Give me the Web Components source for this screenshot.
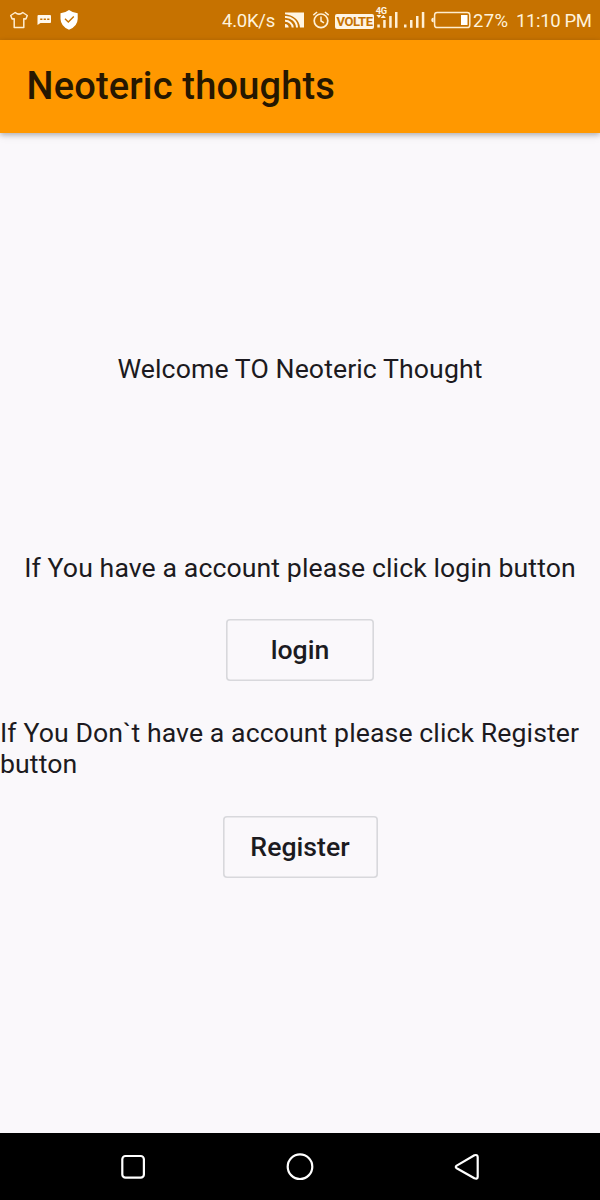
<!DOCTYPE html>
<html lang="en">
<head>
<meta charset="utf-8">
<title>Neoteric thoughts</title>
<style>
html,body{margin:0;height:100%}
body{font-family:Roboto,"Liberation Sans",sans-serif;background:#faf8fb;overflow:hidden}
</style>
</head>
<body>
<phone-screen>
  <status-bar slot="status"></status-bar>
  <app-bar slot="bar">Neoteric thoughts</app-bar>
  <welcome-page></welcome-page>
  <nav-bar slot="nav"></nav-bar>
</phone-screen>
<script>
function define(name, markup) {
  const t = document.createElement('template');
  t.innerHTML = markup;
  customElements.define(name, class extends HTMLElement {
    constructor() {
      super();
      this.attachShadow({mode: 'open'}).appendChild(t.content.cloneNode(true));
    }
  });
}

define('phone-screen', `
<style>
:host{display:flex;flex-direction:column;width:600px;height:1200px;background:#faf8fb}
main{flex:1;min-height:0}
</style>
<slot name="status"></slot><slot name="bar"></slot><main><slot></slot></main><slot name="nav"></slot>`);

define('status-bar', `
<style>
:host{display:flex;align-items:center;height:40px;box-sizing:border-box;background:#c67200;color:#fff3dc;font-size:18.5px;line-height:40px;white-space:nowrap}
svg{display:block;flex:none}
span{flex:none}
.left{width:222px;flex:none}
.rate{width:62px;letter-spacing:-.25px}
.volte{width:39px;height:15px;margin:3px 0 0 4px;border-radius:2px;background:#fff5e4;color:#c67200;font-size:13px;font-weight:700;line-height:15.5px;text-align:center;letter-spacing:-.45px}
.rate,.pct,.time{padding-top:2px}
.pct{width:43px;letter-spacing:.3px}
.time{letter-spacing:-.38px}
</style>
<svg class="left" width="222" height="40" viewBox="0 0 222 40">
  <path d="M15.2 12.5 Q19 15.8 22.8 12.5 L27.3 15.5 L25.9 19 L23.8 18.7 V27.5 H14.2 V18.7 L12.1 19 L10.7 15.5 Z" fill="none" stroke="#ffedcf" stroke-width="1.5" stroke-linejoin="round"/>
  <path d="M38.5 15 H50 Q51 15 51 16 V22.2 Q51 23 50 23 H40.5 L37.5 25 V16 Q37.5 15 38.5 15Z" fill="#fff8ed"/>
  <path d="M40.2 19.3h2.2M43.7 19.3h2.2M47.2 19.3h2.2" stroke="#c67200" stroke-width="1.5"/>
  <path d="M69 10 Q73 13 77.7 13.2 V19 Q77.5 26.5 69 29.7 Q60.8 26.5 60.5 19 V13.2 Q65 13 69 10Z" fill="#fff"/>
  <path d="M65 18.8 L68.3 22 L73.8 16.5" fill="none" stroke="#c67200" stroke-width="1.4"/>
</svg>
<span class="rate">4.0K/s</span>
<svg width="47" height="40" viewBox="284 0 47 40">
  <path d="M285 12.5 H304 V27.5 H300 C299.5 20 293 14.7 285 14.3Z" fill="#fff5e4"/>
  <g fill="none" stroke="#fff5e4" stroke-width="2"><path d="M285 17 A11 10.7 0 0 1 297 27.5M285 20.8 A7.5 7 0 0 1 292.7 27.5"/></g>
  <path d="M285 24 A3.8 3.8 0 0 1 288.7 27.5 H285Z" fill="#fff5e4"/>
  <circle cx="321" cy="20.8" r="6.8" fill="none" stroke="#fff0d5" stroke-width="1.7"/>
  <path d="M321 16.5 V21 L324 22.8 M313.3 15.1 L317.1 12 M324.9 12 L328.7 15.1" fill="none" stroke="#fff0d5" stroke-width="1.5"/>
</svg>
<span class="volte">VOLTE</span>
<svg width="99" height="40" viewBox="374 0 99 40">
  <text x="375.7" y="14" font-size="9.3" font-weight="700" textLength="11.5" fill="#fff5e4">4G</text>
  <path d="M376.3 15h5.2l-2.6 3zM380.7 18l2.6-3 2.6 3z" fill="#fff5e4"/>
  <g fill="#fff0d5"><rect x="377.3" y="24.5" width="2.5" height="3"/><rect x="383.2" y="20" width="2.5" height="7.8"/><rect x="389.2" y="16" width="2.5" height="11.8"/><rect x="395" y="12" width="2.5" height="15.8"/>
  <rect x="404" y="24.5" width="2.5" height="3"/><rect x="410" y="20" width="2.5" height="7.8"/><rect x="416" y="16" width="2.5" height="11.8"/><rect x="421.8" y="12" width="2.5" height="15.8"/></g>
  <rect x="434.6" y="12.5" width="35.2" height="15" rx="2.6" fill="none" stroke="#ffedcf" stroke-width="1.5"/>
  <path d="M433.7 17.5 Q431.2 17.6 431.2 20 Q431.2 22.4 433.7 22.5Z" fill="#fff0d5"/>
  <rect x="461" y="15" width="6.5" height="10" fill="#fff"/>
</svg>
<span class="pct">27%</span><span class="time">11:10 PM</span>`);

define('app-bar', `
<style>
:host{display:flex;align-items:center;position:relative;height:93px;box-sizing:border-box;padding:0 27px 2px 26.5px;background:#ff9800;color:#261700;font-size:38px;font-weight:500;letter-spacing:.17px;white-space:nowrap;box-shadow:0 2px 5px rgba(0,0,0,.24),0 3px 9px rgba(0,0,0,.08)}
</style><div><slot></slot></div>`);

define('body-text', `
<style>
:host{display:block;font-size:26.67px;line-height:31.5px;letter-spacing:.085px;color:#1c1a20}
</style><slot></slot>`);

define('outline-button', `
<style>
:host{display:block}
button{display:flex;align-items:center;justify-content:center;width:100%;height:62px;box-sizing:border-box;padding:0;border:0;border-radius:4px;box-shadow:inset 0 0 0 1.6px #d8d8dc;background:transparent;color:#1c1b1f;font:500 26.67px Roboto,"Liberation Sans",sans-serif}
</style><button><slot></slot></button>`);

define('welcome-page', `
<style>
:host{display:flex;flex-direction:column;align-items:center;height:100%;box-sizing:border-box;padding-top:221px}
.login{margin-top:167px}
.b1{width:148px;margin-top:35px}
.register{width:600px;margin-top:36.5px}
.b2{width:155px;margin-top:35px}
</style>
<body-text class="welcome">Welcome TO Neoteric Thought</body-text>
<body-text class="login">If You have a account please click login button</body-text>
<outline-button class="b1">login</outline-button>
<body-text class="register">If You Don\`t have a account please click Register button</body-text>
<outline-button class="b2">Register</outline-button>`);

define('nav-bar', `
<style>
:host{display:grid;grid-template-columns:repeat(3,167px);justify-content:center;align-items:center;justify-items:center;height:67px;box-sizing:border-box;background:#000}
svg{display:block}
</style>
<svg width="30" height="30" viewBox="0 0 30 30"><rect x="4.3" y="4" width="21.6" height="21.6" rx="3.2" fill="none" stroke="#fff" stroke-width="2.2"/></svg>
<svg width="30" height="30" viewBox="0 0 30 30"><circle cx="15" cy="14.7" r="12.3" fill="none" stroke="#fff" stroke-width="2.2"/></svg>
<svg width="30" height="30" viewBox="0 0 30 30"><path d="M4.7 13.6 L22.4 3.3 Q25.5 2.3 25.7 5 V24.8 Q25.5 27.5 22.4 26.3 L4.7 16.2 Q2.9 14.9 4.7 13.6Z" fill="none" stroke="#fff" stroke-width="2.2" stroke-linejoin="round"/></svg>`);
</script>
</body>
</html>
